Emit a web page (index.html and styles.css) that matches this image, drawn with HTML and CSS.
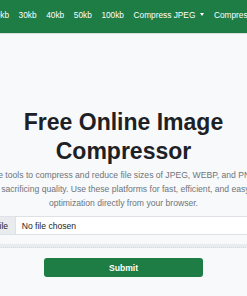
FILE: index.html
```html
<!DOCTYPE html>
<html lang="en">
<head>
<meta charset="utf-8">
<title>Free Online Image Compressor</title>
<link rel="stylesheet" href="styles.css">
</head>
<body>
<nav class="navbar">
  <ul class="nav-links">
    <li>20kb</li>
    <li>30kb</li>
    <li>40kb</li>
    <li>50kb</li>
    <li>100kb</li>
    <li class="dropdown">Compress JPEG</li>
    <li class="dropdown">Compress PNG</li>
  </ul>
</nav>
<main class="page">
  <div class="container">
    <h1 class="title">Free Online Image Compressor</h1>
    <p class="lead">Free online tools to compress and reduce file sizes of JPEG, WEBP, and PNG images without sacrificing quality. Use these platforms for fast, efficient, and easy image optimization directly from your browser.</p>
    <div class="file-group">
      <span class="file-btn">Choose file</span>
      <span class="file-name">No file chosen</span>
    </div>
    <div class="range-track"></div>
    <button class="submit" type="button">Submit</button>
  </div>
</main>
</body>
</html>
```
FILE: styles.css
```css
html, body {
  margin: 0;
  padding: 0;
  overflow: hidden;
  background: #f8f9fa;
  font-family: "Liberation Sans", Arial, sans-serif;
  color: #212529;
}
.navbar {
  background: #1e7c45;
  height: 34px;
  box-sizing: border-box;
  padding-bottom: 4px;
  border-bottom: 1px solid #d9dedb;
  display: flex;
  align-items: center;
  overflow: hidden;
}
.nav-links {
  list-style: none;
  margin: 0 0 0 -9px;
  padding: 0;
  display: flex;
  gap: 9.6px;
  white-space: nowrap;
  font-size: 8.3px;
  color: #fff;
}
.dropdown::after {
  content: "";
  display: inline-block;
  margin-left: 5px;
  vertical-align: 2px;
  border-top: 3px solid #fff;
  border-left: 2px solid transparent;
  border-right: 2px solid transparent;
}
.page {
  display: flex;
  justify-content: center;
  padding-top: 74px;
}
.container {
  flex: none;
  width: 332px;
  display: flex;
  flex-direction: column;
}
.title {
  margin: 0;
  text-align: center;
  font-size: 23px;
  line-height: 29px;
  font-weight: 700;
  color: #1d2125;
}
.lead {
  margin: 2px 0 0;
  text-align: center;
  font-size: 8.6px;
  line-height: 14px;
  color: #6c757d;
}
.file-group {
  margin-top: 6px;
  height: 19px;
  display: flex;
  align-items: stretch;
  background: #fff;
  border: 1px solid #dee2e6;
  border-radius: 3px;
  box-sizing: border-box;
  font-size: 8.6px;
  overflow: hidden;
}
.file-btn {
  display: flex;
  align-items: center;
  padding: 0 6.6px;
  background: #e9ecef;
  border-right: 1px solid #dee2e6;
}
.file-name {
  display: flex;
  align-items: center;
  padding-left: 6px;
}
.range-track {
  margin-top: 9px;
  height: 3px;
  background: #e9ecef;
  border-bottom: 1px dotted #d5d9dd;
}
.submit {
  align-self: center;
  margin-top: 10px;
  width: 159px;
  height: 19px;
  border: none;
  border-radius: 3px;
  background: #1e7c45;
  color: #fff;
  font-family: inherit;
  font-size: 8.6px;
  font-weight: 700;
  padding: 0;
}
```
